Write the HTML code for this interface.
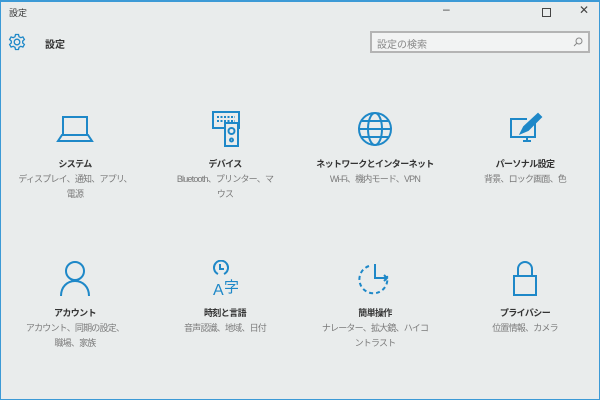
<!DOCTYPE html>
<html><head><meta charset="utf-8"><style>
*{margin:0;padding:0;box-sizing:border-box}
body{width:600px;height:400px;background:#e9ecec;font-family:"Liberation Sans","Noto Sans CJK JP",sans-serif;position:relative;overflow:hidden}
.frame{position:absolute;inset:0;border:1px solid #3c9ad6;border-top:2px solid #3c9ad6}
.t{position:absolute;font-size:9px;color:#333}
.item{position:absolute;width:150px;text-align:center}
.item svg{display:block;margin:0 auto}
.ti{font-size:9px;font-weight:bold;color:#333;margin-top:10px;line-height:15px;letter-spacing:-0.6px;white-space:nowrap}
.su{font-size:9px;color:#7a7a7a;line-height:15px;letter-spacing:-0.8px;white-space:nowrap}
</style></head><body>
<div class="frame"></div>
<div class="t" style="left:9px;top:6px">設定</div>
<div class="t" style="left:443px;top:2px;font-size:12px;color:#444">–</div>
<div style="position:absolute;left:542px;top:8px;width:9px;height:9px;border:1px solid #444"></div>
<div class="t" style="left:579px;top:3px;font-size:12px;color:#444">✕</div>
<svg style="position:absolute;left:8px;top:33px" width="18" height="18" viewBox="0 0 18 18" fill="none" stroke="#1e88c8" stroke-width="1.3"><circle cx="9" cy="9" r="2.8"/><path d="M7.5 1.5h3l.5 2.2 1.8 1 2.1-.8 1.5 2.6-1.7 1.5v2l1.7 1.5-1.5 2.6-2.1-.8-1.8 1-.5 2.2h-3l-.5-2.2-1.8-1-2.1.8-1.5-2.6 1.7-1.5v-2L1.6 6.5 3.1 3.9l2.1.8 1.8-1z"/></svg>
<div class="t" style="left:45px;top:36px;font-size:10px;font-weight:bold">設定</div>
<div style="position:absolute;left:370px;top:31px;width:220px;height:22px;border:2px solid #b4b4b4;background:#f2f3f3"></div>
<div class="t" style="left:377px;top:36px;font-size:10px;color:#888">設定の検索</div>
<svg style="position:absolute;left:573px;top:37px" width="10" height="10" viewBox="0 0 10 10" fill="none" stroke="#888"><circle cx="6" cy="4" r="3"/><path d="M4 6L1 9"/></svg>

<div class="item" style="left:0;top:111px">
<svg width="40" height="36" viewBox="0 0 40 36" fill="none" stroke="#1e88c8" stroke-width="2"><rect x="8" y="6" width="24" height="18"/><path d="M3 30h34l-4-6H7z"/></svg>
<div class="ti">システム</div><div class="su">ディスプレイ、通知、アプリ、<br>電源</div></div>
<div class="item" style="left:150px;top:111px">
<svg width="40" height="36" viewBox="0 0 40 36" fill="none" stroke="#1e88c8" stroke-width="2"><rect x="8" y="1" width="26" height="16"/><path d="M12 6h18M12 10h18" stroke-dasharray="2 1.5"/><rect x="20" y="12" width="13" height="23" fill="#e9ecec"/><circle cx="26.5" cy="20" r="3"/><circle cx="26.5" cy="29" r="1.5"/></svg>
<div class="ti">デバイス</div><div class="su">Bluetooth、プリンター、マ<br>ウス</div></div>
<div class="item" style="left:300px;top:111px">
<svg width="40" height="36" viewBox="0 0 40 36" fill="none" stroke="#1e88c8" stroke-width="2"><circle cx="20" cy="18" r="16"/><ellipse cx="20" cy="18" rx="7" ry="16"/><path d="M4 18h32M7 10h26M7 26h26"/></svg>
<div class="ti">ネットワークとインターネット</div><div class="su">Wi-Fi、機内モード、VPN</div></div>
<div class="item" style="left:450px;top:111px">
<svg width="40" height="36" viewBox="0 0 40 36" fill="none" stroke="#1e88c8" stroke-width="2"><path d="M30 12v14H6V8h16M18 30h8M22 26v4"/><path d="M16 22l3-6 14-13 3 3-13 13z" fill="#1e88c8"/></svg>
<div class="ti">パーソナル設定</div><div class="su">背景、ロック画面、色</div></div>

<div class="item" style="left:0;top:260px">
<svg width="40" height="36" viewBox="0 0 40 36" fill="none" stroke="#1e88c8" stroke-width="2"><circle cx="20" cy="11" r="9"/><path d="M6 36c0-9 6-15 14-15s14 6 14 15"/></svg>
<div class="ti">アカウント</div><div class="su">アカウント、同期の設定、<br>職場、家族</div></div>
<div class="item" style="left:150px;top:260px">
<svg width="40" height="36" viewBox="0 0 40 36" fill="none" stroke="#1e88c8" stroke-width="2"><path d="M13 14a7 7 0 1 1 6 0"/><path d="M15 4v5h4"/><text x="8" y="35" font-size="16" fill="#1e88c8" stroke="none" font-family="Liberation Sans">A</text><text x="19" y="32" font-size="15" fill="#1e88c8" stroke="none" font-family="Noto Sans CJK JP">字</text></svg>
<div class="ti">時刻と言語</div><div class="su">音声認識、地域、日付</div></div>
<div class="item" style="left:300px;top:260px">
<svg width="40" height="36" viewBox="0 0 40 36" fill="none" stroke="#1e88c8" stroke-width="2"><path d="M14 6a14 14 0 1 0 18 10" stroke-dasharray="4 3"/><path d="M20 4v14h12M29 15l3 3-3 3"/></svg>
<div class="ti">簡単操作</div><div class="su">ナレーター、拡大鏡、ハイコ<br>ントラスト</div></div>
<div class="item" style="left:450px;top:260px">
<svg width="40" height="36" viewBox="0 0 40 36" fill="none" stroke="#1e88c8" stroke-width="2"><path d="M13 16V9a7 7 0 0 1 14 0v7"/><rect x="9" y="16" width="22" height="19"/></svg>
<div class="ti">プライバシー</div><div class="su">位置情報、カメラ</div></div>
</body></html>
